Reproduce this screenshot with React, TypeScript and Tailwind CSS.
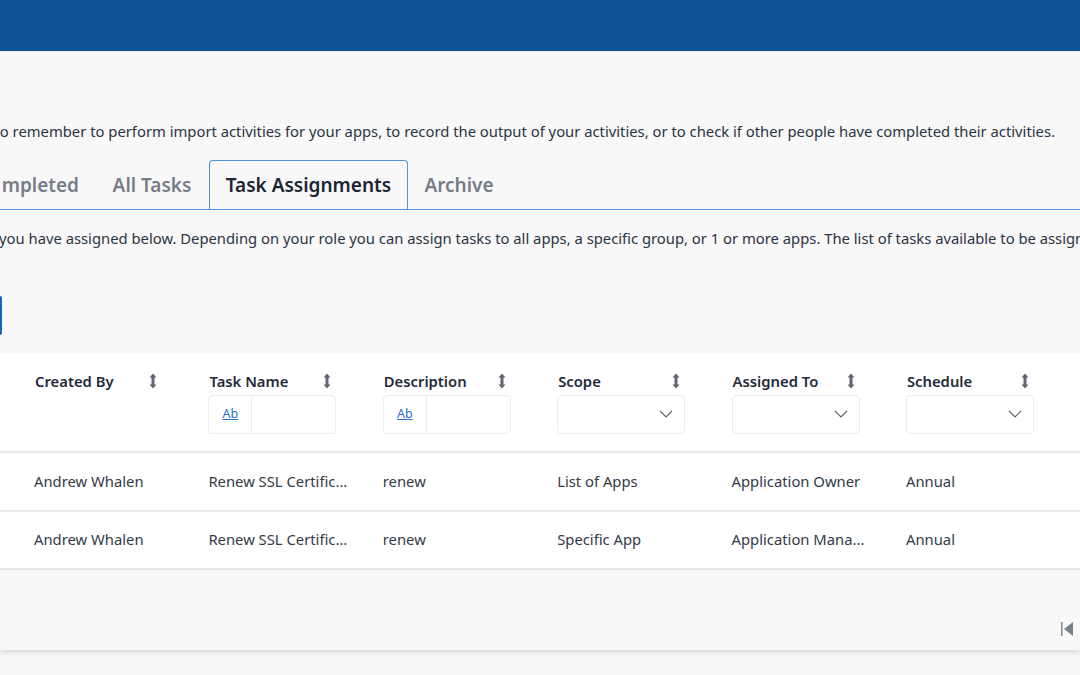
const FONT = "font-['Noto_Sans','Open_Sans',sans-serif]";

const COLUMNS = [
  { title: "Created By", filter: "none" },
  { title: "Task Name", filter: "text" },
  { title: "Description", filter: "text" },
  { title: "Scope", filter: "select" },
  { title: "Assigned To", filter: "select" },
  { title: "Schedule", filter: "select" },
];

const ROWS = [
  ["Andrew Whalen", "Renew SSL Certific...", "renew", "List of Apps", "Application Owner", "Annual"],
  ["Andrew Whalen", "Renew SSL Certific...", "renew", "Specific App", "Application Mana...", "Annual"],
];

const SortIcon = () => (
  <svg width="10" height="16" viewBox="0 0 10 16" className="text-[#5f6672]">
    <path d="M5 0.5 L8.5 4.5 L6.5 4.5 L6.5 11.5 L8.5 11.5 L5 15.5 L1.5 11.5 L3.5 11.5 L3.5 4.5 L1.5 4.5 Z" fill="currentColor" />
  </svg>
);

const Chevron = () => (
  <svg width="14" height="8" viewBox="0 0 14 8" fill="none" stroke="#5f6672" strokeWidth="1.2">
    <path d="M1 1 L7 7 L13 1" />
  </svg>
);

const TextFilter = () => (
  <div className="flex h-[39px] w-[128px] rounded-[4px] border border-[#ececec] bg-white">
    <div className="flex w-[43px] items-center justify-center border-r border-[#ececec]">
      <span className="text-[12.5px] text-[#2a6fc4] underline">Ab</span>
    </div>
  </div>
);

const SelectFilter = () => (
  <div className="flex h-[39px] w-[128px] items-center justify-end rounded-[4px] border border-[#ececec] bg-white pb-[2px] pr-[11px]">
    <Chevron />
  </div>
);

const App = () => {
  return (
    <div className={`${FONT} h-[675px] w-[1080px] overflow-hidden bg-[#f8f8f8] text-[#2b3442]`}>
      <div className="h-[51px] bg-[#0f5499]" />

      <div className="mt-[70px] flex h-[20px] items-center justify-end whitespace-nowrap pr-[25px] text-[14.8px] leading-[20px]">
        to remember to perform import activities for your apps, to record the output of your activities, or to check if other people have completed their activities.
      </div>

      <div className="mt-[19px] flex h-[50px] items-end border-b border-[#4f93dc]">
        <div className="relative -ml-[10px] flex items-end text-[19px] font-semibold text-[#767c88]">
          <div className="flex h-[49px] w-[102px] items-center justify-end whitespace-nowrap pr-[13px] pt-[2px]">
            <span>mpleted</span>
          </div>
          <div className="flex h-[49px] w-[117px] items-center justify-center pl-[3px] pt-[2px]">All Tasks</div>
          <div className="flex h-[49px] w-[199px] items-center justify-center rounded-t-[4px] border border-b-0 border-[#4f93dc] bg-[#f8f8f8] pt-[1px] text-[#1b2433]">
            Task Assignments
          </div>
          <div className="flex h-[49px] w-[102px] items-center justify-center pt-[2px]">Archive</div>
        </div>
      </div>

      <div className="mt-[18px] h-[20px] whitespace-nowrap text-[14.8px] leading-[20px]">
        <div className="-ml-[1px]">
          you have assigned below. Depending on your role you can assign tasks to all apps, a specific group, or 1 or more apps. The list of tasks available to be assigned
        </div>
      </div>

      <div className="mt-[48px] h-[39px] w-[2px] rounded-r-[4px] bg-[#1466bd]" />

      <div className="mt-[18px] bg-white">
        <div className="grid h-[100px] grid-cols-[repeat(6,174.4px)] border-b-2 border-[#e9e9e9] pl-[34px]">
          {COLUMNS.map((col) => (
            <div key={col.title} className="flex flex-col pt-[19px]">
              <div className="flex h-[18px] w-[128px] items-center justify-between pr-[4px]">
                <span className="pl-[1px] text-[14.8px] font-semibold leading-[18px] text-[#1f2a3a]">{col.title}</span>
                <SortIcon />
              </div>
              <div className="mt-[5px]">
                {col.filter === "text" && <TextFilter />}
                {col.filter === "select" && <SelectFilter />}
              </div>
            </div>
          ))}
        </div>
        {ROWS.map((row, i) => (
          <div key={i} className="grid h-[58.5px] grid-cols-[repeat(6,174.4px)] items-center border-b-2 border-[#e9e9e9] pb-[1px] pl-[34px] text-[14.8px] text-[#333b47]">
            {row.map((cell, j) => (
              <div key={j}>{cell}</div>
            ))}
          </div>
        ))}
      </div>

      <div className="flex h-[80px] items-end justify-end bg-[#f8f8f8] pb-[14px] pr-[7px] shadow-[0_2px_6px_rgba(0,0,0,0.14)]">
        <svg width="12" height="14" viewBox="0 0 12 14">
          <rect x="0" y="0" width="1.6" height="14" fill="#8a8f99" />
          <path d="M12 0 L12 14 L3 7 Z" fill="#7a808c" />
        </svg>
      </div>
    </div>
  );
};

export default App;
